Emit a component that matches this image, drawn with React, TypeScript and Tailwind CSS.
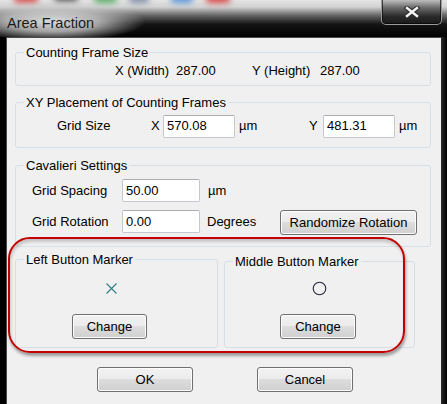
import React from "react";

const font = { fontFamily: '"Liberation Sans", Arial, sans-serif' };

function WinButton({ label, className = "" }: { label: string; className?: string }) {
  return (
    <button
      type="button"
      className={`flex items-center justify-center rounded-[3px] border border-[#707070] bg-[linear-gradient(to_bottom,#f2f2f2_0%,#ebebeb_50%,#dddddd_50%,#cfcfcf_100%)] shadow-[inset_0_0_0_1px_#fcfcfc] text-[13px] text-black ${className}`}
    >
      {label}
    </button>
  );
}

function TextBox({ value, className = "" }: { value: string; className?: string }) {
  return (
    <div
      className={`flex items-center h-[23px] bg-white border border-[#c3c7ce] border-t-[#abadb3] rounded-[2px] pl-[3px] text-[13px] ${className}`}
    >
      {value}
    </div>
  );
}

function Group({ title, className = "", children }: { title: string; className?: string; children: React.ReactNode }) {
  return (
    <fieldset className={`border border-[#d5dfe5] rounded-[3px] px-[8px] ${className}`}>
      <legend className="px-[2px] h-[15px] leading-[15px] text-[13px]">{title}</legend>
      {children}
    </fieldset>
  );
}

export default function App() {
  return (
    <div className="relative w-[447px] h-[404px] overflow-hidden bg-black text-black" style={font}>
      {/* Title bar */}
      <div className="relative h-[37px] flex justify-between bg-[linear-gradient(to_bottom,#e4e4e4_0px,#d2d2d2_7px,#6a6a6a_15px,#151515_24px,#000_37px)]">
        {/* blurred taskbar icons behind the glass */}
        <div className="absolute left-[14px] -top-[7px] w-[24px] h-[10px] rounded bg-[#d23030]/80 blur-[3px]" />
        <div className="absolute left-[54px] -top-[8px] w-[24px] h-[9px] rounded bg-[#222]/80 blur-[3px]" />
        <div className="absolute left-[94px] -top-[7px] w-[23px] h-[10px] rounded bg-[#3aa04a]/80 blur-[3px]" />
        <div className="absolute left-[129px] -top-[7px] w-[20px] h-[10px] rounded bg-[#6a7a98]/80 blur-[3px]" />
        <div className="absolute left-[171px] -top-[7px] w-[22px] h-[10px] rounded bg-[#3a82d8]/80 blur-[3px]" />
        <div className="absolute left-[206px] -top-[7px] w-[24px] h-[10px] rounded bg-[#d42020]/80 blur-[3px]" />

        <div className="relative h-[37px] w-[160px] pl-[7px] pt-[11px] bg-[radial-gradient(ellipse_58%_55%_at_33%_58%,rgba(225,225,225,0.97)_0%,rgba(200,200,200,0.8)_50%,rgba(0,0,0,0)_100%)]">
          <span className="text-[14.5px] leading-[18px] text-[#1b1b1b]">Area Fraction</span>
        </div>

        <div className="relative mr-[5px] w-[61px] h-[26px] -mt-[1px] rounded-b-[5px] border border-[#9a9a9a] border-t-0 bg-[linear-gradient(to_bottom,#c8c8c8_0%,#6a6a6a_35%,#2a2a2a_70%,#1a1a1a_100%)] shadow-[inset_0_0_0_1px_rgba(0,0,0,0.6)] flex items-center justify-center">
          <svg width="16" height="12" viewBox="0 0 16 12" aria-hidden="true">
            <path d="M3 2 L13 10 M13 2 L3 10" stroke="#2b2b2b" strokeWidth="4.6" strokeLinecap="square" />
            <path d="M3 2 L13 10 M13 2 L3 10" stroke="#f4f4f4" strokeWidth="2.4" strokeLinecap="square" />
          </svg>
        </div>
      </div>

      {/* Client area */}
      <div className="ml-[6px] w-[435px] h-[367px] bg-[#f0f0f0] border-l border-t border-[#4a4a4a] pl-[8px] pr-[10px] pt-[7px]">
        <Group title="Counting Frame Size">
          <div className="flex items-center h-[22px] mb-[3px] pl-[91px] text-[13px]">
            <span className="w-[61px]">X (Width)</span>
            <span className="w-[76px]">287.00</span>
            <span className="w-[68px]">Y (Height)</span>
            <span>287.00</span>
          </div>
        </Group>

        <Group title="XY Placement of Counting Frames" className="mt-[9px]">
          <div className="flex items-center h-[24px] mt-[4px] mb-[9px] pl-[33px] text-[13px]">
            <span className="w-[94px]">Grid Size</span>
            <span className="w-[12px]">X</span>
            <TextBox value="570.08" className="w-[72px]" />
            <span className="ml-[4px] w-[70px]">µm</span>
            <span className="w-[14px]">Y</span>
            <TextBox value="481.31" className="w-[72px]" />
            <span className="ml-[4px]">µm</span>
          </div>
        </Group>

        <Group title="Cavalieri Settings" className="mt-[10px]">
          <div className="mt-[6px] mb-[11px] pl-[8px] text-[13px]">
            <div className="flex items-center h-[23px]">
              <span className="w-[90px]">Grid Spacing</span>
              <TextBox value="50.00" className="w-[78px]" />
              <span className="ml-[8px]">µm</span>
            </div>
            <div className="flex items-start h-[25px] mt-[8px]">
              <span className="w-[90px] h-[23px] flex items-center">Grid Rotation</span>
              <TextBox value="0.00" className="w-[78px]" />
              <span className="ml-[7px] w-[73px] h-[23px] flex items-center">Degrees</span>
              <WinButton label="Randomize Rotation" className="w-[137px] h-[25px]" />
            </div>
          </div>
        </Group>

        <div className="flex items-start mt-[5px]">
          <Group title="Left Button Marker" className="w-[203px]">
            <div className="pt-[13px] pb-[8px]">
              <div className="h-[16px] ml-[82px] flex items-center">
                <svg width="11" height="11" viewBox="0 0 11 11" aria-hidden="true">
                  <path d="M0.5 0.5 L10.5 10.5 M10.5 0.5 L0.5 10.5" stroke="#2f7d84" strokeWidth="1.1" />
                </svg>
              </div>
              <WinButton label="Change" className="ml-[48px] mt-[18px] w-[75px] h-[25px]" />
            </div>
          </Group>
          <Group title="Middle Button Marker" className="w-[191px] ml-[6px] mt-[2px]">
            <div className="pt-[11px] pb-[8px]">
              <div className="h-[16px] ml-[79px] flex items-center">
                <svg width="15" height="15" viewBox="0 0 15 15" aria-hidden="true">
                  <circle cx="7.5" cy="7.5" r="6.3" fill="none" stroke="#23233a" strokeWidth="1.1" />
                </svg>
              </div>
              <WinButton label="Change" className="ml-[47px] mt-[18px] w-[76px] h-[25px]" />
            </div>
          </Group>
        </div>

        <div className="flex mt-[19px] pl-[82px]">
          <WinButton label="OK" className="w-[96px] h-[25px]" />
          <WinButton label="Cancel" className="ml-[64px] w-[96px] h-[25px]" />
        </div>
      </div>

      {/* right frame */}
      <div className="absolute right-0 top-[37px] w-[6px] h-[367px] bg-[linear-gradient(to_right,#2a2a2a,#000)]" />

      {/* red annotation */}
      <div className="absolute left-[8px] top-[237px] w-[397px] h-[116px] border-2 border-[#c40000] rounded-[22px] shadow-[1px_3px_3px_rgba(0,0,0,0.35),inset_1px_3px_3px_rgba(0,0,0,0.18)]" />
    </div>
  );
}
